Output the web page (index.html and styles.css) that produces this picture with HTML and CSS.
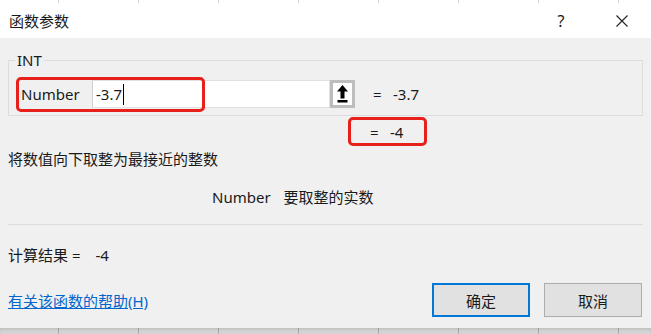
FILE: index.html
```html
<!DOCTYPE html>
<html lang="zh-CN">
<head>
    <meta charset="UTF-8">
    <meta name="viewport" content="width=device-width, initial-scale=1.0">
    <title>函数参数</title>
    <link rel="stylesheet" href="styles.css">
</head>
<body>
    <div class="sheet-top"></div>

    <div class="dialog">
        <div class="titlebar">
            <span class="title">函数参数</span>
            <span class="help">?</span>
            <span class="close">
                <svg width="12" height="12" viewBox="0 0 12 12"><path d="M0.5 0.5 L11.5 11.5 M11.5 0.5 L0.5 11.5" stroke="#222" stroke-width="1.1" fill="none"/></svg>
            </span>
        </div>

        <div class="content">
            <fieldset class="args">
                <legend>INT</legend>
                <div class="arg-row">
                    <span class="arg-label">Number</span>
                    <span class="arg-input">-3.7<span class="caret"></span></span>
                    <span class="ref-btn">
                        <svg width="11" height="18" viewBox="0 0 11 18"><polygon points="5.5,0 11,6.5 0,6.5" fill="#000"/><rect x="3.5" y="6" width="4" height="7.5" fill="#000"/><rect x="0.5" y="15" width="10" height="2.5" fill="#000"/></svg>
                    </span>
                    <span class="eq">=</span>
                    <span class="val">-3.7</span>
                    <span class="mark mark-arg"></span>
                </div>
            </fieldset>

            <div class="result-row">
                <span class="mark-result"><span class="eq">=</span><span class="val">-4</span></span>
            </div>

            <p class="desc">将数值向下取整为最接近的整数</p>
            <p class="arg-desc"><span class="arg-name">Number</span>要取整的实数</p>

            <div class="sep"></div>

            <p class="calc">计算结果 =<span class="calc-val">-4</span></p>

            <div class="footer">
                <a class="help-link" href="#">有关该函数的帮助(H)</a>
                <div class="buttons">
                    <button class="btn btn-ok">确定</button>
                    <button class="btn">取消</button>
                </div>
            </div>
        </div>
    </div>

    <div class="sheet-bottom"></div>
</body>
</html>
```

FILE: styles.css
```css
body {
    margin: 0;
    width: 651px;
    height: 334px;
    overflow: hidden;
    font-family: "Noto Sans", "Noto Sans CJK SC", sans-serif;
    font-size: 15px;
    color: #1a1a1a;
    background-color: #f0f0f0;
}
.sheet-top {
    height: 3px;
    background-color: #fff;
    background-image: linear-gradient(to right, #d4d4d4 0 1px, transparent 1px 80px);
    background-size: 80px 100%;
    background-position: 58px 0;
}
.sheet-bottom {
    height: 6px;
    background-color: #d4d4d4;
    background-image: linear-gradient(to right, #a9a9a9 0 1px, transparent 1px 80px);
    background-size: 80px 100%;
    background-position: 58px 0;
    box-shadow: inset 0 2px 2px rgba(0, 0, 0, 0.08);
}
.dialog {
    height: 325px;
    display: flex;
    flex-direction: column;
    background-color: #f0f0f0;
}
.titlebar {
    height: 35px;
    flex-shrink: 0;
    display: flex;
    align-items: center;
    background-color: #fff;
    padding-left: 9px;
}
.title { flex: 1; }
.help {
    width: 16px;
    text-align: center;
    margin-right: 47px;
    font-size: 16px;
}
.close {
    display: flex;
    margin-right: 23px;
}
.content {
    flex: 1;
    display: flex;
    flex-direction: column;
    padding: 0 8px;
}
.args {
    margin: 12px 0 0 0;
    padding: 0 0 7px 0;
    border: 1px solid #dcdcdc;
    min-width: 0;
}
.args legend {
    margin-left: 6px;
    padding: 0 2px;
    line-height: 20px;
}
.arg-row {
    position: relative;
    display: flex;
    align-items: center;
    height: 28px;
    margin-top: 10px;
    padding-left: 10px;
}
.arg-label {
    width: 71px;
    padding-left: 2px;
}
.arg-input {
    width: 238px;
    height: 28px;
    box-sizing: border-box;
    display: flex;
    align-items: center;
    padding-left: 3px;
    background-color: #fff;
    border: 1px solid #e0e0e0;
    border-left-color: #d0d0d0;
}
.caret {
    display: inline-block;
    width: 1px;
    height: 21px;
    margin-left: 1px;
    background-color: #000;
}
.ref-btn {
    width: 25px;
    height: 28px;
    box-sizing: border-box;
    display: flex;
    align-items: center;
    justify-content: center;
    background-color: #fff;
    border: 3px solid #bdbdbd;
}
.eq {
    width: 20px;
    margin-left: 18px;
}
.mark {
    position: absolute;
    left: 7px;
    top: -3px;
    width: 189px;
    height: 35px;
    box-sizing: border-box;
    border: 3px solid #e8201c;
    border-radius: 5px;
}
.result-row {
    height: 29px;
    margin-top: 1px;
    display: flex;
}
.mark-result {
    margin-left: 340px;
    width: 79px;
    box-sizing: border-box;
    display: flex;
    align-items: center;
    border: 3px solid #e8201c;
    border-radius: 5px;
}
.mark-result .eq { margin-left: 19px; }
p { margin: 0; line-height: 20px; }
.desc { margin-top: 3px; }
.arg-desc { margin-top: 18px; padding-left: 204px; }
.arg-name { margin-right: 13px; }
.sep {
    height: 1px;
    margin-top: 17px;
    background-color: #dcdcdc;
}
.calc { margin-top: 20px; }
.calc-val { margin-left: 15px; }
.footer {
    margin-top: auto;
    margin-bottom: 11px;
    display: flex;
    align-items: center;
    justify-content: space-between;
}
.help-link {
    color: #0066cc;
    text-decoration: underline;
}
.buttons {
    display: flex;
    gap: 14px;
    margin-right: 1px;
}
.btn {
    width: 98px;
    height: 34px;
    font-family: inherit;
    font-size: 15px;
    color: #1a1a1a;
    background-color: #e1e1e1;
    border: 1px solid #adadad;
    padding: 0;
}
.btn-ok { border: 2px solid #0078d7; }
```
